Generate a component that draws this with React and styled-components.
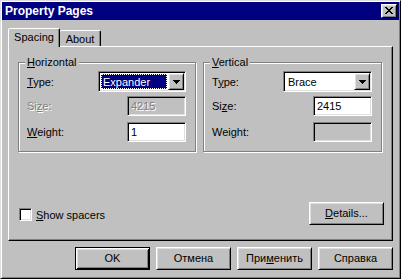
import React from "react";
import styled, { createGlobalStyle, css } from "styled-components";

const GlobalStyle = createGlobalStyle`
  html, body {
    margin: 0;
    padding: 0;
    background: #c0c0c0;
  }
  * {
    box-sizing: border-box;
  }
`;

const raised = css`
  border: 1px solid;
  border-color: #ffffff #000000 #000000 #ffffff;
  box-shadow: inset 1px 1px 0 #dfdfdf, inset -1px -1px 0 #808080;
`;

const sunken = css`
  border: 1px solid;
  border-color: #808080 #ffffff #ffffff #808080;
  box-shadow: inset 1px 1px 0 #000000, inset -1px -1px 0 #dfdfdf;
`;

const Window = styled.div`
  width: 401px;
  height: 279px;
  display: flex;
  flex-direction: column;
  padding: 1px;
  background: #c0c0c0;
  border: 1px solid;
  border-color: #dfdfdf #000000 #000000 #dfdfdf;
  box-shadow: inset 1px 1px 0 #ffffff, inset -1px -1px 0 #808080;
  font-family: "Liberation Sans", Arial, sans-serif;
  font-size: 11px;
  color: #000000;
`;

const TitleBar = styled.div`
  height: 18px;
  flex: none;
  display: flex;
  align-items: center;
  justify-content: space-between;
  padding: 0 2px 0 3px;
  background: #000080;
  color: #ffffff;
  font-weight: bold;
  font-size: 12px;
`;

const CloseButton = styled.div`
  ${raised};
  width: 16px;
  height: 14px;
  background: #c0c0c0;
  display: flex;
  align-items: center;
  justify-content: center;
  padding-bottom: 1px;
`;

const Body = styled.div`
  flex: 1;
  display: flex;
  flex-direction: column;
  padding: 8px 6px 7px 6px;
`;

const TabStrip = styled.div`
  height: 18px;
  display: flex;
  align-items: flex-end;
  position: relative;
  z-index: 1;
`;

const Tab = styled.div`
  height: ${(p) => (p.$active ? 19 : 16)}px;
  margin-bottom: ${(p) => (p.$active ? -1 : 0)}px;
  width: ${(p) => p.$width}px;
  display: flex;
  align-items: center;
  justify-content: center;
  padding-bottom: ${(p) => (p.$active ? 2 : 0)}px;
  background: #c0c0c0;
  border: 1px solid;
  border-bottom: none;
  border-color: #ffffff #000000 transparent #ffffff;
  border-left-width: ${(p) => (p.$active ? 1 : 0)}px;
  border-radius: 2px 2px 0 0;
  box-shadow: inset -1px 0 0 #808080;
`;

const Panel = styled.div`
  flex: 1;
  display: flex;
  flex-direction: column;
  padding: 15px 8px 15px 9px;
  border: 1px solid;
  border-color: #ffffff #000000 #000000 #ffffff;
  box-shadow: inset -1px -1px 0 #808080;
`;

const Groups = styled.div`
  display: grid;
  grid-template-columns: 178px 179px;
  column-gap: 7px;
`;

const Group = styled.div`
  position: relative;
  display: flex;
  flex-direction: column;
  padding: 8px 0 9px 0;
  border: 1px solid #808080;
  box-shadow: 1px 1px 0 #ffffff, inset 1px 1px 0 #ffffff;
`;

const Legend = styled.span`
  position: absolute;
  top: -7px;
  left: 6px;
  padding: 0 2px 0 2px;
  background: #c0c0c0;
  line-height: 13px;
`;

const Row = styled.div`
  display: flex;
  align-items: center;
  justify-content: space-between;
  padding: 0 9px 0 8px;
  margin-top: ${(p) => p.$gap || 0}px;
`;

const Label = styled.span`
  color: ${(p) => (p.$disabled ? "#808080" : "#000000")};
  text-shadow: ${(p) => (p.$disabled ? "1px 1px 0 #ffffff" : "none")};
`;

const Key = styled.span`
  text-decoration: underline;
  text-underline-offset: 1px;
`;

const Combo = styled.div`
  ${sunken};
  width: ${(p) => p.$width}px;
  height: 21px;
  display: flex;
  padding: 1px;
  background: #ffffff;
`;

const ComboValue = styled.div`
  flex: 1;
  display: flex;
  padding: 1px;
`;

const Highlight = styled.div`
  flex: 1;
  display: flex;
  align-items: center;
  padding-left: 1px;
  background: ${(p) => (p.$focused ? "#000080" : "transparent")};
  color: ${(p) => (p.$focused ? "#ffffff" : "#000000")};
  border: 1px dotted ${(p) => (p.$focused ? "#ffffff" : "transparent")};
`;

const DropButton = styled.div`
  ${raised};
  width: 16px;
  height: 17px;
  background: #c0c0c0;
  display: flex;
  align-items: center;
  justify-content: center;
`;

const Field = styled.div`
  ${sunken};
  width: ${(p) => p.$width}px;
  height: 20px;
  display: flex;
  align-items: center;
  padding: 0 3px;
  background: ${(p) => (p.$disabled ? "#c0c0c0" : "#ffffff")};
  color: ${(p) => (p.$disabled ? "#808080" : "#000000")};
  text-shadow: ${(p) => (p.$disabled ? "1px 1px 0 #ffffff" : "none")};
`;

const Footer = styled.div`
  margin-top: auto;
  display: flex;
  align-items: center;
  justify-content: space-between;
  padding: 0 0 0 1px;
`;

const CheckRow = styled.label`
  display: flex;
  align-items: center;
  gap: 4px;
  margin-top: 2px;
`;

const CheckBox = styled.span`
  ${sunken};
  width: 13px;
  height: 13px;
  background: #ffffff;
`;

const Button = styled.div`
  ${raised};
  width: 75px;
  height: 23px;
  display: flex;
  align-items: center;
  justify-content: center;
  background: #c0c0c0;
  padding-bottom: 1px;

  ${(p) =>
    p.$default &&
    css`
      border: 1px solid #000000;
      box-shadow: inset 1px 1px 0 #ffffff, inset -1px -1px 0 #000000,
        inset 2px 2px 0 #dfdfdf, inset -2px -2px 0 #808080;
    `}
`;

const ButtonBar = styled.div`
  margin-top: 6px;
  display: flex;
  justify-content: flex-end;
  gap: 6px;
`;

const closeGlyph = [
  "11....11",
  ".11..11.",
  "..1111..",
  "...11...",
  "..1111..",
  ".11..11.",
  "11....11",
];

const CloseIcon = () => (
  <svg width="8" height="7" viewBox="0 0 8 7" shapeRendering="crispEdges">
    {closeGlyph.map((line, y) =>
      line
        .split("")
        .map((c, x) =>
          c === "1" ? <rect key={`${x}-${y}`} x={x} y={y} width="1" height="1" fill="#000" /> : null
        )
    )}
  </svg>
);

const Arrow = () => (
  <svg width="7" height="4" viewBox="0 0 7 4" shapeRendering="crispEdges">
    <rect x="0" y="0" width="7" height="1" fill="#000" />
    <rect x="1" y="1" width="5" height="1" fill="#000" />
    <rect x="2" y="2" width="3" height="1" fill="#000" />
    <rect x="3" y="3" width="1" height="1" fill="#000" />
  </svg>
);

const App = () => {
  return (
    <>
      <GlobalStyle />
      <Window>
        <TitleBar>
          <span>Property Pages</span>
          <CloseButton>
            <CloseIcon />
          </CloseButton>
        </TitleBar>
        <Body>
          <TabStrip>
            <Tab $active $width={52}>Spacing</Tab>
            <Tab $width={41}>About</Tab>
          </TabStrip>
          <Panel>
            <Groups>
              {/* Horizontal group */}
              <Group>
                <Legend>
                  <Key>H</Key>orizontal
                </Legend>
                <Row>
                  <Label>
                    <Key>T</Key>ype:
                  </Label>
                  <Combo $width={88}>
                    <ComboValue>
                      <Highlight $focused>Expander</Highlight>
                    </ComboValue>
                    <DropButton>
                      <Arrow />
                    </DropButton>
                  </Combo>
                </Row>
                <Row $gap={4}>
                  <Label $disabled>
                    Si<Key>z</Key>e:
                  </Label>
                  <Field $width={59} $disabled>
                    4215
                  </Field>
                </Row>
                <Row $gap={6}>
                  <Label>
                    <Key>W</Key>eight:
                  </Label>
                  <Field $width={59}>1</Field>
                </Row>
              </Group>
              {/* Vertical group */}
              <Group>
                <Legend>
                  <Key>V</Key>ertical
                </Legend>
                <Row>
                  <Label>
                    T<Key>y</Key>pe:
                  </Label>
                  <Combo $width={89}>
                    <ComboValue>
                      <Highlight>Brace</Highlight>
                    </ComboValue>
                    <DropButton>
                      <Arrow />
                    </DropButton>
                  </Combo>
                </Row>
                <Row $gap={4}>
                  <Label>
                    Si<Key>z</Key>e:
                  </Label>
                  <Field $width={59}>2415</Field>
                </Row>
                <Row $gap={6}>
                  <Label>Weight:</Label>
                  <Field $width={59} $disabled />
                </Row>
              </Group>
            </Groups>
            <Footer>
              <CheckRow>
                <CheckBox />
                <span>
                  <Key>S</Key>how spacers
                </span>
              </CheckRow>
              <Button>
                <span>
                  <Key>D</Key>etails...
                </span>
              </Button>
            </Footer>
          </Panel>
          <ButtonBar>
            <Button $default>OK</Button>
            <Button>Отмена</Button>
            <Button>
              <span>
                При<Key>м</Key>енить
              </span>
            </Button>
            <Button>Справка</Button>
          </ButtonBar>
        </Body>
      </Window>
    </>
  );
};

export default App;
